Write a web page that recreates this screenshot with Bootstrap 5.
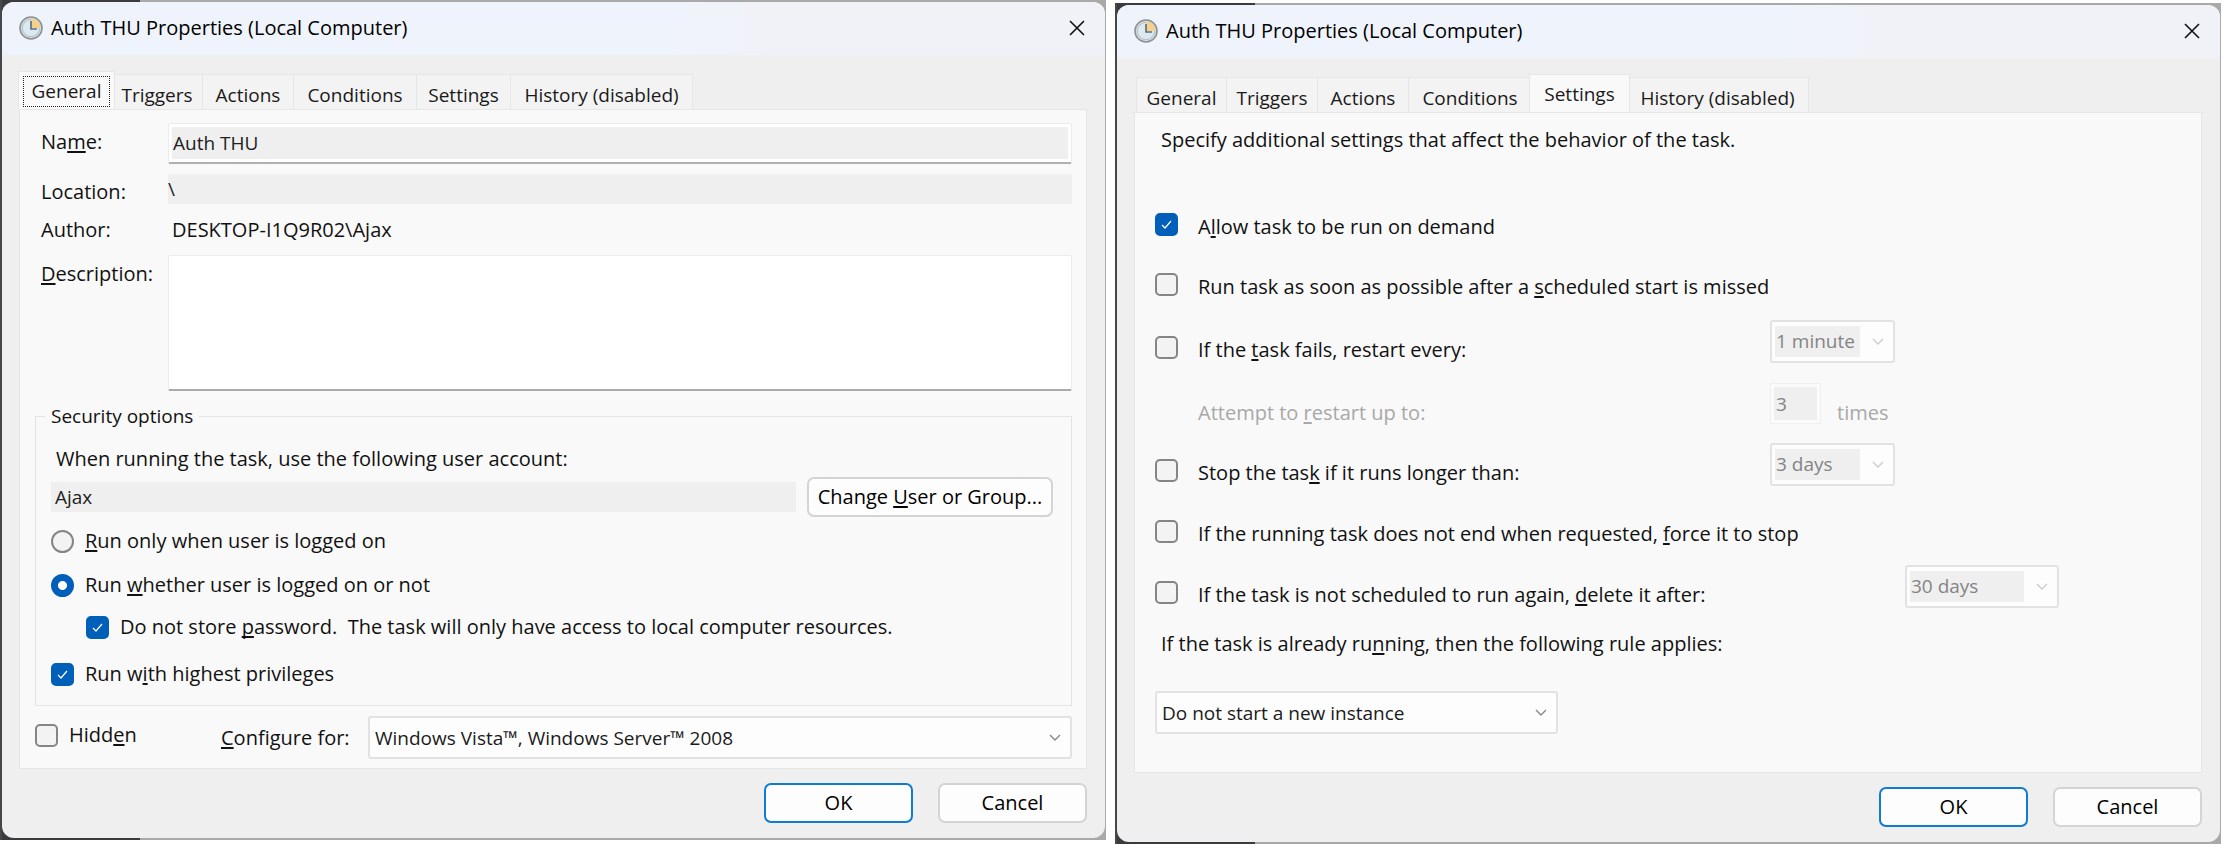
<!DOCTYPE html>
<html lang="en">
<head>
<meta charset="utf-8">
<meta name="viewport" content="width=device-width, initial-scale=1">
<title>Auth THU Properties (Local Computer)</title>
<link href="https://cdn.jsdelivr.net/npm/bootstrap@5.3.0/dist/css/bootstrap.min.css" rel="stylesheet">
<style>
  body { font-family: "Open Sans", "Noto Sans", sans-serif; font-size: 20px; line-height: 30px; color: #111; background: #fff; }
  u { text-decoration-thickness: 2px; text-underline-offset: 2px; text-decoration-skip-ink: none; }
  .desk { gap: 9px; padding-right: 6px; }
  .backdrop { flex: 1 1 0; min-width: 0; padding: 2px 1px 2px 2px; background: linear-gradient(90deg, #47474a 0 2px, transparent 2px), linear-gradient(90deg, #3a3b3f 0 140px, #a9a9a9 140px); }
  .second { margin-top: 3px; }
  .dialog { background: #efefef; border-radius: 12px; overflow: hidden; }
  .titlebar { height: 53px; padding: 0 20px 2px 17px; gap: 8px; background: linear-gradient(90deg, #eff3fb 60%, #f1f2f8 70%); color: #000; }
  .close-x { border: 0; background: none; padding: 0; line-height: 0; }

  .tabs { padding: 19px 19px 0; font-size: 19px; }
  .tabs .tab { border: 1px solid #e6e6e6; border-bottom: 0; border-left-width: 0; background: #f3f3f3; color: #1a1a1a; height: 35px; padding: 3px 0 0; white-space: nowrap; text-align: center; line-height: 34px; overflow: hidden; }
  .tabs .tab:first-child { border-left-width: 1px; }
  .tabs .active { position: relative; height: 38px; margin: -3px -3px -1px; padding: 0 4px; background: #f9f9f9; border-left-width: 1px; }
  .tabs .ring { display: block; outline: 1px dotted #222; outline-offset: -1px; margin: 4px 0; line-height: 31px; }
  .w-gen, .w-tri, .w-act { width: 91px; } .w-con { width: 123px; } .w-set { width: 94px; } .w-his { width: 182px; }
  .active.w-gen { width: 97px; } .active.w-set { width: 101px; }

  .panel { margin: 0 18px 0 17px; border: 1px solid #e6e6e6; background: #f9f9f9; }
  .general { padding: 13px 14px 9px 15px; }
  .line { padding-bottom: 10px; }
  .line-tight { padding-bottom: 4px; }
  .general .cap { flex: 0 0 133px; padding: 4px 0 0 6px; }
  .general .line-tight .cap { padding-top: 3px; }
  .flat, .boxed, .drop, .count, .security legend { font-size: 19px; }
  .flat { border: 0; background: #efefef; color: #222; height: 30px; padding: 0; border-radius: 0; min-width: 0; }
  .boxed { height: 41px; border: 1px solid #ececec; border-bottom: 2px solid #b0b0b0; background: #efefef; box-shadow: inset 0 0 0 3px #fff; padding: 0 4px; color: #222; min-width: 0; border-radius: 2px; }
  .memo { height: 136px; border: 1px solid #ececec; border-bottom: 2px solid #aaa; background: #fff; resize: none; border-radius: 2px; }
  .security { border: 1px solid #e4e4e4; margin-top: 10px; padding: 0 18px 16px 15px; }
  .security legend { float: none; width: auto; line-height: 30px; margin: 0 0 0 -6px; padding: 0 6px; }
  .intro { padding: 13px 0 3px 5px; }
  .account { gap: 11px; margin-bottom: 9px; }
  .account .push { width: 246px; }
  .choice { gap: 11px; }
  .security .choice + .choice { margin-top: 14px; }
  .security .choice.nested { margin: 12px 0 17px 35px; }
  .security .choice.nested + .choice { margin-top: 0; }
  .configure { margin-top: 10px; }
  .configure .choice { flex: 0 0 186px; }
  .configure .for-label { flex: 0 0 147px; }
  .choice .form-check-input, .setting .form-check-input { flex: none; float: none; width: 23px; height: 23px; margin: 0; border: 2px solid #858585; background-color: #f3f3f3; background-size: 19px; background-position: center; }
  .form-check-input[type=checkbox] { border-radius: 5px; }
  .choice .form-check-input:checked, .setting .form-check-input:checked { background-color: #005fb8; border-color: #005fb8; }
  .form-check-input:checked[type=checkbox] { background-image: url("data:image/svg+xml,%3csvg xmlns='http://www.w3.org/2000/svg' viewBox='0 0 19 19'%3e%3cpath fill='none' stroke='%23fff' stroke-width='1.2' d='M5 10l3 3 6-7'/%3e%3c/svg%3e"); }
  .form-check-input:checked[type=radio] { background-image: radial-gradient(circle, #fff 4px, transparent 5px); }

  .push { height: 40px; border: 2px solid #d4d4d4; border-radius: 7px; background: #fdfdfd; padding: 0; color: #000; white-space: nowrap; }
  .push-main { border-color: #0f7bd1; }
  .actions { padding: 14px 18px 15px; gap: 25px; }
  .actions .push { width: 149px; }

  .drop { appearance: none; height: 43px; border: 2px solid #e2e2e2; border-radius: 3px; padding: 0 30px 0 5px; color: #1a1a1a; min-width: 0;
    background: url("data:image/svg+xml,%3csvg xmlns='http://www.w3.org/2000/svg' viewBox='0 0 12 8'%3e%3cpath fill='none' stroke='%23888' stroke-width='1.4' d='M1 1l5 5 5-5'/%3e%3c/svg%3e") no-repeat right 9px center / 12px 8px #fdfdfd; }
  .drop:disabled { color: #848484; opacity: 1; padding: 0 0 2px 4px;
    background: url("data:image/svg+xml,%3csvg xmlns='http://www.w3.org/2000/svg' viewBox='0 0 12 8'%3e%3cpath fill='none' stroke='%23ccc' stroke-width='1.4' d='M1 1l5 5 5-5'/%3e%3c/svg%3e") no-repeat right 9px center / 12px 8px, linear-gradient(#efefef, #efefef) no-repeat 3px 4px / calc(100% - 36px) 31px #fdfdfd; }
  .drop-short { width: 125px; }
  .drop-mid { width: 154px; }
  .drop-rule { width: 403px; }
  .settings { padding: 12px 20px 38px; }
  .lead-in { padding-left: 6px; }
  .about { margin-bottom: 42px; }
  .rule-label { margin: 3px 0 32px; }
  .setting { min-height: 61px; }
  .setting.short { min-height: 60px; }
  .setting.tall { min-height: 63px; }
  .setting .form-check-input { margin: 16px 20px 0 0; }
  .setting label { padding-top: 15px; }
  .setting .far { flex: 0 1 572px; }
  .setting .farther { flex: 0 1 707px; }
  .indent { padding-left: 43px; }
  .faint { color: #a8a8a8; }
  .count { width: 51px; height: 41px; border: 1px solid #efefef; background: #efefef; box-shadow: inset 0 0 0 3px #fbfbfb; padding: 0 0 0 5px; color: #848484; }
</style>
</head>
<body>
<svg width="0" height="0" class="position-absolute" aria-hidden="true">
  <symbol id="clock" viewBox="0 0 24 24">
    <circle cx="12" cy="12" r="11" fill="#d5dde2" stroke="#8d9192" stroke-width="1.6"/>
    <circle cx="12" cy="12" r="8.6" fill="#dce9f0" stroke="#b4bec3" stroke-width="1"/>
    <path d="M12 12V2.5A9.5 9.5 0 0 1 21.5 12z" fill="#f4d08a"/>
    <path d="M12 5v8h6" fill="none" stroke="#5b7080" stroke-width="1.7"/>
  </symbol>
  <symbol id="cross" viewBox="0 0 16 16"><path d="M1 1l14 14M15 1L1 15" stroke="#111" stroke-width="1.6" fill="none"/></symbol>
</svg>
<main class="desk d-flex align-items-start">
  <div class="backdrop">
    <section class="dialog" aria-label="General properties">
      <header class="titlebar d-flex align-items-center">
        <svg width="24" height="24" aria-hidden="true"><use href="#clock"/></svg>
        <span class="flex-grow-1">Auth THU Properties (Local Computer)</span>
        <button type="button" class="close-x" aria-label="Close"><svg width="16" height="16"><use href="#cross"/></svg></button>
      </header>
      <div class="tabs d-flex" role="tablist">
        <button type="button" role="tab" class="tab active w-gen" aria-selected="true"><span class="ring">General</span></button>
        <button type="button" role="tab" class="tab w-tri">Triggers</button>
        <button type="button" role="tab" class="tab w-act">Actions</button>
        <button type="button" role="tab" class="tab w-con">Conditions</button>
        <button type="button" role="tab" class="tab w-set">Settings</button>
        <button type="button" role="tab" class="tab w-his">History (disabled)</button>
      </div>
      <form class="panel general">
        <div class="line d-flex">
          <label class="cap" for="name">Na<u>m</u>e:</label>
          <input id="name" class="boxed flex-grow-1" value="Auth THU" readonly>
        </div>
        <div class="line-tight d-flex">
          <label class="cap" for="location">Location:</label>
          <input id="location" class="flat flex-grow-1" value="\" readonly>
        </div>
        <div class="line d-flex">
          <span class="cap">Author:</span>
          <span class="pt-1 ps-1">DESKTOP-I1Q9R02\Ajax</span>
        </div>
        <div class="d-flex">
          <label class="cap" for="desc"><u>D</u>escription:</label>
          <textarea id="desc" class="memo flex-grow-1"></textarea>
        </div>
        <fieldset class="security">
          <legend>Security options</legend>
          <div class="intro">When running the task, use the following user account:</div>
          <div class="account d-flex align-items-center">
            <input class="flat flex-grow-1 ps-1" value="Ajax" aria-label="User account" readonly>
            <button type="button" class="push">Change <u>U</u>ser or Group...</button>
          </div>
          <div class="choice d-flex align-items-center">
            <input class="form-check-input" type="radio" name="logon" id="r1"><label for="r1"><u>R</u>un only when user is logged on</label>
          </div>
          <div class="choice d-flex align-items-center">
            <input class="form-check-input" type="radio" name="logon" id="r2" checked><label for="r2">Run <u>w</u>hether user is logged on or not</label>
          </div>
          <div class="choice nested d-flex align-items-center">
            <input class="form-check-input" type="checkbox" id="c1" checked><label for="c1">Do not store <u>p</u>assword.&nbsp; The task will only have access to local computer resources.</label>
          </div>
          <div class="choice d-flex align-items-center">
            <input class="form-check-input" type="checkbox" id="c2" checked><label for="c2">Run w<u>i</u>th highest privileges</label>
          </div>
        </fieldset>
        <div class="configure d-flex align-items-center">
          <div class="choice d-flex align-items-center align-self-start pt-1">
            <input class="form-check-input" type="checkbox" id="c3"><label for="c3">Hidd<u>e</u>n</label>
          </div>
          <label class="for-label" for="conf"><u>C</u>onfigure for:</label>
          <select id="conf" class="drop flex-grow-1"><option>Windows Vista™, Windows Server™ 2008</option></select>
        </div>
      </form>
      <footer class="actions d-flex justify-content-end">
        <button type="button" class="push push-main">OK</button>
        <button type="button" class="push">Cancel</button>
      </footer>
    </section>
  </div>

  <div class="backdrop second">
    <section class="dialog" aria-label="Settings properties">
      <header class="titlebar d-flex align-items-center">
        <svg width="24" height="24" aria-hidden="true"><use href="#clock"/></svg>
        <span class="flex-grow-1">Auth THU Properties (Local Computer)</span>
        <button type="button" class="close-x" aria-label="Close"><svg width="16" height="16"><use href="#cross"/></svg></button>
      </header>
      <div class="tabs d-flex" role="tablist">
        <button type="button" role="tab" class="tab w-gen">General</button>
        <button type="button" role="tab" class="tab w-tri">Triggers</button>
        <button type="button" role="tab" class="tab w-act">Actions</button>
        <button type="button" role="tab" class="tab w-con">Conditions</button>
        <button type="button" role="tab" class="tab active w-set" aria-selected="true">Settings</button>
        <button type="button" role="tab" class="tab w-his">History (disabled)</button>
      </div>
      <form class="panel settings">
        <div class="lead-in about">Specify additional settings that affect the behavior of the task.</div>
        <div class="setting short d-flex align-items-start">
          <input class="form-check-input" type="checkbox" id="s1" checked><label for="s1">A<u>l</u>low task to be run on demand</label>
        </div>
        <div class="setting tall d-flex align-items-start">
          <input class="form-check-input" type="checkbox" id="s2"><label for="s2">Run task as soon as possible after a <u>s</u>cheduled start is missed</label>
        </div>
        <div class="setting tall d-flex align-items-start">
          <input class="form-check-input" type="checkbox" id="s3"><label class="far" for="s3">If the <u>t</u>ask fails, restart every:</label>
          <select class="drop drop-short" aria-label="Restart interval" disabled><option>1 minute</option></select>
        </div>
        <div class="setting short indent d-flex align-items-start faint">
          <label class="far" for="count">Attempt to <u>r</u>estart up to:</label>
          <input id="count" class="count" value="3" disabled>
          <label class="ps-3" for="count">times</label>
        </div>
        <div class="setting d-flex align-items-start">
          <input class="form-check-input" type="checkbox" id="s4"><label class="far" for="s4">Stop the tas<u>k</u> if it runs longer than:</label>
          <select class="drop drop-short" aria-label="Stop after" disabled><option>3 days</option></select>
        </div>
        <div class="setting d-flex align-items-start">
          <input class="form-check-input" type="checkbox" id="s5"><label for="s5">If the running task does not end when requested, <u>f</u>orce it to stop</label>
        </div>
        <div class="setting d-flex align-items-start">
          <input class="form-check-input" type="checkbox" id="s6"><label class="farther" for="s6">If the task is not scheduled to run again, <u>d</u>elete it after:</label>
          <select class="drop drop-mid" aria-label="Delete after" disabled><option>30 days</option></select>
        </div>
        <label class="lead-in rule-label d-block" for="rule">If the task is already ru<u>n</u>ning, then the following rule applies:</label>
        <select id="rule" class="drop drop-rule d-block"><option>Do not start a new instance</option></select>
      </form>
      <footer class="actions d-flex justify-content-end">
        <button type="button" class="push push-main">OK</button>
        <button type="button" class="push">Cancel</button>
      </footer>
    </section>
  </div>
</main>
<script src="https://cdn.jsdelivr.net/npm/bootstrap@5.3.0/dist/js/bootstrap.bundle.min.js"></script>
</body>
</html>
